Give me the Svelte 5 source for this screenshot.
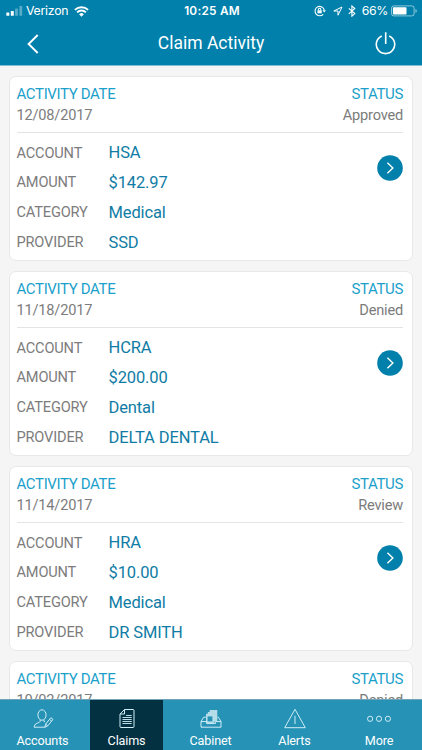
<script>
  const claims = [
    { date: '12/08/2017', status: 'Approved', account: 'HSA', amount: '$142.97', category: 'Medical', provider: 'SSD' },
    { date: '11/18/2017', status: 'Denied', account: 'HCRA', amount: '$200.00', category: 'Dental', provider: 'DELTA DENTAL' },
    { date: '11/14/2017', status: 'Review', account: 'HRA', amount: '$10.00', category: 'Medical', provider: 'DR SMITH' },
    { date: '10/02/2017', status: 'Denied' }
  ];
  const fields = ['account', 'amount', 'category', 'provider'];
  const tabs = ['Accounts', 'Claims', 'Cabinet', 'Alerts', 'More'];
</script>

<div class="screen">
  <header>
    <div class="statusbar">
      <div class="carrier">
        <svg width="17" height="12" viewBox="0 0 17 12" fill="#fff">
          <rect x="0.3" y="7.5" width="3" height="3.2" rx=".5" />
          <rect x="4.8" y="6" width="3" height="4.7" rx=".5" />
          <rect x="9.1" y="3.4" width="2.8" height="7.3" rx=".5" opacity=".35" />
          <rect x="13.4" y="1" width="2.8" height="9.7" rx=".5" opacity=".35" />
        </svg>
        <span class="name">Verizon</span>
        <svg width="15" height="11" viewBox="0 0 15 11" fill="none" stroke="#fff" stroke-width="1.9">
          <path d="M.9 3.9a9.4 9.4 0 0 1 13.2 0M3.1 6.4a6.2 6.2 0 0 1 8.8 0" />
          <path d="M5.1 8.2a3.4 3.4 0 0 1 4.8 0L7.5 10.7z" fill="#fff" stroke="none" />
        </svg>
      </div>
      <span class="time">10:25 AM</span>
      <div class="system">
        <svg width="12" height="12" viewBox="0 0 12 12" fill="none" stroke="#fff" stroke-width="1.1">
          <path d="M9.2 9.3A4.7 4.7 0 1 1 10.3 5" />
          <path d="M8.5 5.2h3.4l-1.7 2.2z" fill="#fff" stroke="none" />
          <path d="M4.4 5.5V4.4a1.2 1.2 0 0 1 2.4 0v1.1" />
          <rect x="3.5" y="5.3" width="4.2" height="3" fill="#fff" stroke="none" />
        </svg>
        <svg class="loc" width="10" height="10" viewBox="0 0 10 10" fill="none" stroke="#fff" stroke-width="1" stroke-linejoin="round">
          <path d="M.8 5 9 1 5 9.2V5z" />
        </svg>
        <svg class="bt" width="8" height="12" viewBox="0 0 8 12" fill="none" stroke="#fff" stroke-width="1.1">
          <path d="M.8 3.3 6.8 8.6 3.9 11.2V.9L6.8 3.5.8 8.8" />
        </svg>
        <span class="pct">66%</span>
        <svg width="27" height="12" viewBox="0 0 27 12">
          <rect x=".5" y=".9" width="22.6" height="10" rx="2.2" fill="none" stroke="#fff" stroke-opacity=".55" />
          <rect x="1.9" y="2.3" width="13.6" height="7.2" rx=".8" fill="#fff" />
          <path d="M24.4 4v3.8q1.5-.5 1.5-1.9t-1.5-1.9z" fill="#fff" opacity=".5" />
        </svg>
      </div>
    </div>
    <div class="nav">
      <svg class="back" width="12" height="20" viewBox="0 0 12 20" fill="none" stroke="#fff" stroke-width="1.9">
        <path d="M10.7 1 1.6 10l9.1 9" />
      </svg>
      <h1>Claim Activity</h1>
      <svg class="power" width="21" height="24" viewBox="0 0 21 24" fill="none" stroke="#fff" stroke-width="1.6">
        <path d="M6.8 4a9.2 9.2 0 1 0 7.4 0M10.7.3v11.6" />
      </svg>
    </div>
  </header>

  <main>
    {#each claims as claim}
      <article>
        <div class="top">
          <div>
            <div class="heading">ACTIVITY DATE</div>
            <div class="sub">{claim.date}</div>
          </div>
          <div class="right">
            <div class="heading">STATUS</div>
            <div class="sub">{claim.status}</div>
          </div>
        </div>
        {#if claim.account}
          <div class="body">
            <dl>
              {#each fields as field}
                <div class="row">
                  <dt>{field.toUpperCase()}</dt>
                  <dd>{claim[field]}</dd>
                </div>
              {/each}
            </dl>
            <svg class="go" width="26" height="26" viewBox="0 0 26 26">
              <circle cx="13" cy="13" r="12.8" fill="#0080ab" />
              <path d="M10.4 7.8 15.9 13l-5.5 5.2" fill="none" stroke="#fff" stroke-width="1.4" />
            </svg>
          </div>
        {/if}
      </article>
    {/each}
  </main>

  <footer>
    {#each tabs as tab}
      <div class="tab" class:active={tab === 'Claims'}>
        <svg width="24" height="22" viewBox="0 0 24 22" fill="none" stroke="#d0edf6" stroke-width="1">
          {#if tab === 'Accounts'}
            <ellipse cx="11" cy="7" rx="4.1" ry="5.2" />
            <path d="M9.2 11.8v1.6q-.3.9-2.4 1.5-3.6 1-3.8 4.3h11.2M12.9 11.8v1.5l1.2.7" />
            <path d="m13.9 19.2.8-3.1 5.2-6.4 2.1 1.7-5.2 6.4zM18.5 11.4l2.1 1.7M14.7 16.1l2.1 1.7" />
          {:else if tab === 'Claims'}
            <path d="M9.5 1.5h8.5q1 0 1 1v16q0 1-1 1H6q-1 0-1-1V6zM9.5 1.5V6H5" />
            <path d="M11 7.5h5.7M7.5 9.5h9.2M7.5 11.5h9.2M7.5 13.5h9.2M7.5 15.5h9.2" stroke-width=".9" />
          {:else if tab === 'Cabinet'}
            <path d="M7 13V5.8h1.8V3.9h1.9V2h7.6v11h-3.4V5.8" fill="#b5dde9" stroke="none" />
            <path d="M7 6h8.8v7.4l-1 1.7H8.2L7 13.4z" fill="#b5dde9" stroke="none" />
            <path d="M8.6 8.4h4.8v5H8.6z" fill="#2592b6" stroke="none" />
            <path d="M6.8 9.2H4.6L2 13.6v5.6h20v-5.6l-2.6-4.4h-1M2 13.6h5.6v2h8.8v-2H22" />
          {:else if tab === 'Alerts'}
            <path d="M12 1.3 22.3 19.7H1.7zM12 7.8v8.2" stroke-linejoin="round" />
          {:else}
            <circle cx="3.1" cy="10.8" r="2.6" />
            <circle cx="12" cy="10.8" r="2.6" />
            <circle cx="20.9" cy="10.8" r="2.6" />
          {/if}
        </svg>
        <span>{tab}</span>
      </div>
    {/each}
  </footer>
</div>

<style>
  :global(body) { margin: 0; }
  .screen {
    width: 422px;
    height: 750px;
    display: flex;
    flex-direction: column;
    overflow: hidden;
    background: #f5f5f5;
    font-family: Roboto, sans-serif;
  }
  svg { display: block; flex: none; }
  header {
    flex: none;
    height: 65px;
    background: #0080ab;
    border-bottom: 1px solid #7fc0d6;
    color: #fff;
  }
  .statusbar {
    height: 22px;
    display: grid;
    grid-template-columns: 1fr auto 1fr;
    align-items: center;
    padding: 0 4px 0 6px;
    font: 12.3px/22px Inter, sans-serif;
  }
  .carrier, .system { display: flex; align-items: center; }
  .name { margin: 0 6px 0 3px; letter-spacing: -0.25px; }
  .time { font-weight: 600; font-size: 11.8px; letter-spacing: 0.25px; }
  .system { justify-content: flex-end; }
  .loc { margin-left: 7px; }
  .bt { margin: 0 6px 0 5px; }
  .pct { margin-right: 3px; font-size: 12.3px; letter-spacing: -0.4px; }
  .nav {
    height: 43px;
    display: grid;
    grid-template-columns: 12px 1fr 21px;
    align-items: center;
    padding: 0 26px 0 27px;
  }
  h1 {
    margin: 0 0 0 8px;
    text-align: center;
    font-size: 17.5px;
    font-weight: 400;
    line-height: 43px;
    letter-spacing: 0;
  }
  main { flex: 1; min-height: 0; overflow: hidden; padding: 10px 9px 0; }
  article {
    box-sizing: border-box;
    height: 185px;
    margin-bottom: 10px;
    padding: 0 9px 0 6.5px;
    border: 1px solid #e8e8e8;
    border-radius: 7px;
    background: #fff;
  }
  .top {
    display: flex;
    justify-content: space-between;
    height: 48px;
    padding-top: 7px;
    border-bottom: 1px solid #e4e4e4;
  }
  .heading { font-size: 15px; line-height: 20px; letter-spacing: -0.36px; color: #1b9fcb; }
  .sub { font-size: 14.6px; line-height: 22px; letter-spacing: -0.2px; color: #7c7c7c; }
  .right { text-align: right; }
  .body { display: flex; justify-content: space-between; }
  dl { margin: 0; padding-top: 5px; }
  .row { display: flex; height: 30px; line-height: 30px; }
  dt { width: 92px; font-size: 14.6px; letter-spacing: -0.17px; color: #7c7c7c; }
  .row + .row dt { line-height: 28px; }
  dd { margin: 0; font-size: 16.5px; letter-spacing: -0.12px; color: #107ca5; }
  .go { margin-top: 22px; }
  footer {
    flex: none;
    box-sizing: border-box;
    display: grid;
    grid-template-columns: 90px 73px 95px 73px 91px;
    height: 51px;
    border-top: 1px solid #6fa3b5;
    background: #2592b6;
  }
  .tab {
    box-sizing: border-box;
    display: flex;
    flex-direction: column;
    align-items: center;
    padding-top: 8px;
    color: #fff;
    font-size: 12.6px;
    line-height: 18px;
    letter-spacing: -0.15px;
  }
  .tab:first-child { padding-right: 5px; }
  .tab:last-child { padding-left: 5px; }
  .tab span { margin-top: 2px; }
  .active { background: #033142; }
</style>
